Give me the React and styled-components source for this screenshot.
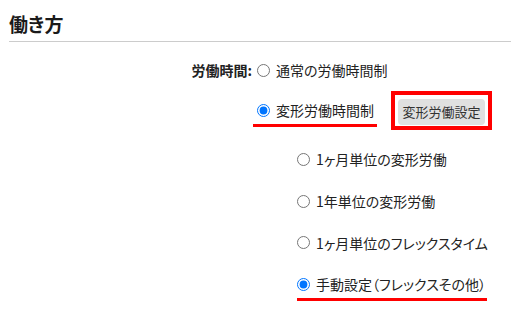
import React from "react";
import styled, { createGlobalStyle } from "styled-components";

const Global = createGlobalStyle`
  html, body { margin: 0; padding: 0; background: #fff; }
  body {
    font-family: "Noto Sans CJK JP", "Noto Sans", sans-serif;
    color: #222;
    font-feature-settings: "palt";
  }
`;

const Page = styled.div`
  width: 511px;
  height: 321px;
  overflow: hidden;
  box-sizing: border-box;
  padding: 0 0 0 9px;
`;

const Title = styled.h2`
  margin: 0;
  padding: 11px 0 4px;
  font-size: 19px;
  line-height: 26px;
  font-weight: 700;
  color: #1a1a1a;
  border-bottom: 1px solid #cccccc;
`;

const Form = styled.div`
  display: flex;
  flex-direction: column;
  padding-top: 17px;
`;

const Row = styled.div`
  display: flex;
  align-items: ${(p) => (p.$top ? "flex-start" : "center")};
  height: ${(p) => p.$h}px;
  padding-left: ${(p) => p.$indent || 0}px;
`;

const Label = styled.span`
  width: 243px;
  text-align: right;
  font-size: 14px;
  font-weight: 700;
  line-height: 20px;
  flex: none;
`;

const Option = styled.label`
  display: inline-flex;
  align-items: center;
  font-size: 14px;
  line-height: 20px;
  margin-left: ${(p) => p.$ml || 0}px;
  margin-top: ${(p) => p.$mt || 0}px;
  padding-left: ${(p) => p.$pl || 0}px;
  padding-right: ${(p) => p.$pr || 0}px;
  padding-bottom: ${(p) => (p.$marked ? "4px" : "0")};
  border-bottom: ${(p) => (p.$marked ? "3px solid #f00" : "none")};
`;

const Radio = styled.input.attrs({ type: "radio" })`
  width: 13px;
  height: 13px;
  margin: 0 6px 0 0;
  flex: none;
`;

const Highlight = styled.div`
  margin-left: ${(p) => p.$ml}px;
  margin-top: ${(p) => p.$mt}px;
  border: 4px solid #f00;
  padding: 4px 3px 1px 3px;
  display: flex;
`;

const Button = styled.button`
  font-family: "Noto Sans CJK JP", sans-serif;
  font-size: 13px;
  line-height: 18px;
  color: #333;
  background: #e0e0e0;
  border: none;
  border-radius: 4px;
  padding: 4px 4px;
  width: 87px;
  height: 26px;
  white-space: nowrap;
  font-feature-settings: normal;
`;

const SubList = styled.div`
  display: flex;
  flex-direction: column;
  padding-left: 288px;
`;

export default function App() {
  return (
    <Page>
      <Global />
      <Title>働き方</Title>
      <Form>
        <Row $h={22}>
          <Label>労働時間:</Label>
          <Option $ml={5}>
            <Radio name="wt" />
            通常の労働時間制
          </Option>
        </Row>
        <Row $h={57} $indent={244} $top>
          <Option $marked $mt={19} $pl={4} $pr={3}>
            <Radio name="wt" defaultChecked />
            変形労働時間制
          </Option>
          <Highlight $ml={14} $mt={10}>
            <Button>変形労働設定</Button>
          </Highlight>
        </Row>
        <SubList>
          <Row $h={42}>
            <Option>
              <Radio name="sub" />
              1ヶ月単位の変形労働
            </Option>
          </Row>
          <Row $h={42}>
            <Option>
              <Radio name="sub" />
              1年単位の変形労働
            </Option>
          </Row>
          <Row $h={41}>
            <Option>
              <Radio name="sub" />
              1ヶ月単位のフレックスタイム
            </Option>
          </Row>
          <Row $h={42} $top>
            <Option $marked $mt={11} $pr={1}>
              <Radio name="sub" defaultChecked />
              手動設定（フレックスその他）
            </Option>
          </Row>
        </SubList>
      </Form>
    </Page>
  );
}
